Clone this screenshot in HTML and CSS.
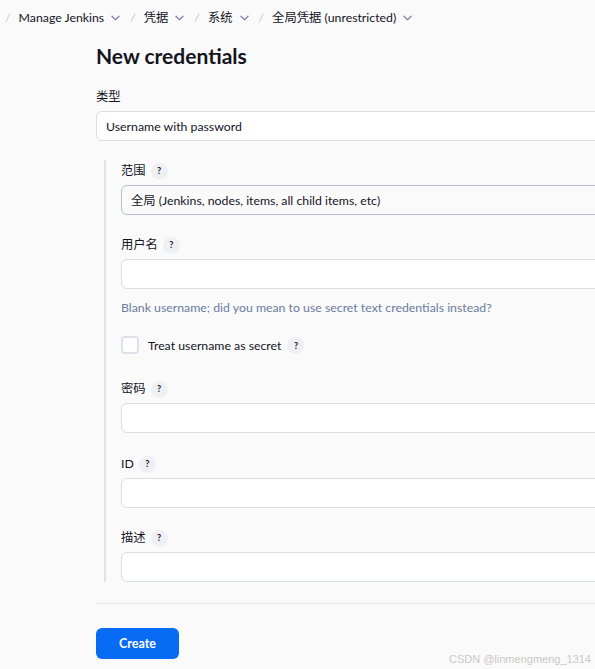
FILE: index.html
```html
<!DOCTYPE html>
<html lang="zh">
<head>
<meta charset="utf-8">
<title>New credentials</title>
<link rel="stylesheet" href="styles.css">
</head>
<body>
<nav class="crumbs">
  <span class="sep">/</span>
  <span class="crumb">Manage Jenkins</span>
  <svg class="chev" viewBox="0 0 10 6"><path d="M1 1l4 4 4-4"/></svg>
  <span class="sep">/</span>
  <span class="crumb">凭据</span>
  <svg class="chev" viewBox="0 0 10 6"><path d="M1 1l4 4 4-4"/></svg>
  <span class="sep">/</span>
  <span class="crumb">系统</span>
  <svg class="chev" viewBox="0 0 10 6"><path d="M1 1l4 4 4-4"/></svg>
  <span class="sep">/</span>
  <span class="crumb">全局凭据 (unrestricted)</span>
  <svg class="chev" viewBox="0 0 10 6"><path d="M1 1l4 4 4-4"/></svg>
</nav>

<main class="main">
  <h1 class="title">New credentials</h1>

  <div class="field">
    <div class="label">类型</div>
    <div class="control select">Username with password</div>
  </div>

  <section class="nested">
    <div class="field">
      <div class="label">范围 <span class="help">?</span></div>
      <div class="control select scope">全局 (Jenkins, nodes, items, all child items, etc)</div>
    </div>

    <div class="field">
      <div class="label">用户名 <span class="help">?</span></div>
      <div class="control"></div>
    </div>
    <div class="hint">Blank username; did you mean to use secret text credentials instead?</div>

    <div class="check-row">
      <span class="checkbox"></span>
      <span class="check-label">Treat username as secret</span>
      <span class="help">?</span>
    </div>

    <div class="field pw">
      <div class="label">密码 <span class="help">?</span></div>
      <div class="control"></div>
    </div>

    <div class="field id">
      <div class="label">ID <span class="help">?</span></div>
      <div class="control"></div>
    </div>

    <div class="field">
      <div class="label">描述 <span class="help">?</span></div>
      <div class="control"></div>
    </div>
  </section>

  <hr class="rule">

  <button class="btn" type="button">Create</button>
</main>

<div class="watermark">CSDN @linmengmeng_1314</div>
</body>
</html>
```

FILE: styles.css
```css
html, body {
  margin: 0;
  padding: 0;
}
body {
  background: #fafafa;
  color: #14141f;
  font-family: "Lato", "Noto Sans CJK SC", sans-serif;
  font-size: 12.3px;
  overflow: hidden;
  height: 669px;
  position: relative;
}

.crumbs {
  display: flex;
  align-items: center;
  height: 34px;
  padding-left: 5px;
  white-space: nowrap;
}
.sep {
  color: #c4cad6;
  margin-right: 8px;
}
.crumb {
  color: #14141f;
}
.chev {
  width: 9px;
  height: 6px;
  margin: 1px 10px 0 7px;
  fill: none;
  stroke: #7e8aa3;
  stroke-width: 1.4;
  stroke-linecap: round;
  stroke-linejoin: round;
}

.main {
  padding-left: 96px;
  width: 620px;
}
.title {
  margin: 9px 0 0;
  font-size: 21px;
  line-height: 26px;
  font-weight: 700;
  color: #14141f;
}

.field {
  margin-top: 21px;
}
.main > .field {
  margin-top: 19px;
}
.label {
  display: flex;
  align-items: center;
  gap: 5px;
  height: 18px;
  line-height: 18px;
  margin-bottom: 5px;
}
.help {
  display: inline-flex;
  align-items: center;
  justify-content: center;
  width: 17px;
  height: 17px;
  border-radius: 50%;
  background: #eef0f4;
  font-size: 9px;
  font-weight: 700;
  color: #14141f;
}
.control {
  box-sizing: border-box;
  height: 30px;
  border: 1px solid #d9dee7;
  border-radius: 6px;
  background: #ffffff;
  padding: 0 9px;
  display: flex;
  align-items: center;
}
.scope {
  background: #fafafa;
  border-color: #b6bdce;
}

.nested {
  margin-top: 19px;
  margin-left: 8px;
  border-left: 2px solid #dfe3ea;
  padding-left: 15px;
}
.nested > .field:first-child {
  margin-top: 0;
  padding-top: 2px;
}
.hint {
  margin-top: 10px;
  height: 18px;
  line-height: 18px;
  color: #6b7c9e;
}
.check-row {
  display: flex;
  align-items: center;
  margin-top: 19px;
  height: 18px;
}
.checkbox {
  box-sizing: border-box;
  width: 18px;
  height: 18px;
  border: 2px solid #dde1e9;
  border-radius: 4px;
  background: #fff;
  margin-right: 9px;
}
.check-label {
  margin-right: 6px;
}
.nested .pw {
  margin-top: 26px;
}
.nested .id {
  margin-top: 22px;
}

.rule {
  margin: 21px 0 0;
  border: 0;
  border-top: 1px solid #e2e4ec;
  height: 0;
}
.btn {
  margin-top: 24px;
  width: 83px;
  height: 31px;
  border: 0;
  border-radius: 6px;
  background: #076bf4;
  color: #fff;
  font-family: "Lato", sans-serif;
  font-size: 12.5px;
  font-weight: 700;
  cursor: pointer;
}

.watermark {
  position: absolute;
  right: 4px;
  bottom: 4px;
  font-family: "Liberation Sans", sans-serif;
  font-size: 11px;
  color: #c9c9c9;
}
```
